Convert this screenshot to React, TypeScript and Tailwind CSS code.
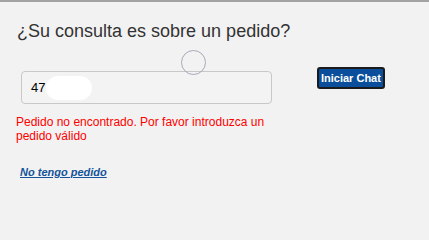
import React from "react";

export default function App() {
  return (
    <div className="relative w-[429px] min-h-[212px] h-screen bg-[#f2f2f2] border-t-2 border-[#a3a3a3] overflow-hidden" style={{ fontFamily: '"Liberation Sans", Arial, sans-serif' }}>
      <div className="pl-[17px] pt-[19px] text-[18px] leading-[21px] text-[#333333]">¿Su consulta es sobre un pedido?</div>
      <div className="flex items-start mt-[29px]">
        <div className="ml-[21px] w-[251px] h-[33px] rounded-[4px] border border-[#c8c8c8] bg-[#f3f3f3] flex items-center pl-[9px]">
          <span className="text-[13px] text-black">47</span>
          <span className="ml-[1px] w-[46px] h-[24px] rounded-full bg-white"></span>
        </div>
        <button className="ml-[45px] mt-[-4px] h-[22px] px-[2px] rounded-[3px] border-2 border-[#1b1b1b] bg-[#0b4f9c] text-white font-bold text-[11px] leading-none">Iniciar Chat</button>
      </div>
      <div className="pl-[16px] pr-[150px] mt-[11px] text-[12px] leading-[14px] text-[#ff0000]">Pedido no encontrado. Por favor introduzca un pedido válido</div>
      <div className="pl-[20px] mt-[16px]">
        <a href="#" className="text-[11px] font-bold italic underline text-[#14539a]">No tengo pedido</a>
      </div>
      <div className="absolute left-[181px] top-[48px] w-[25px] h-[25px] rounded-full border-[1.5px] border-[#a9a8b8]"></div>
    </div>
  );
}
